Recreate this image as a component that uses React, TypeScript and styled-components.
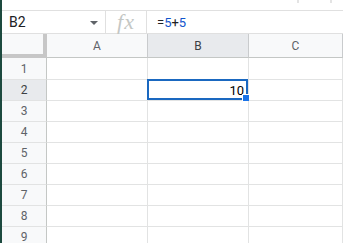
import styled, { createGlobalStyle } from 'styled-components'

const GlobalStyle = createGlobalStyle`
  html, body {
    margin: 0;
    padding: 0;
    background: #ffffff;
    overflow: hidden;
  }
  * {
    box-sizing: border-box;
  }
`

const Page = styled.div`
  display: flex;
  width: 343px;
  height: 243px;
  overflow: hidden;
  font-family: Roboto, 'Liberation Sans', Arial, sans-serif;
`

const EdgeStrip = styled.div`
  width: 2px;
  flex-shrink: 0;
  background: #1d4a3f;
`

const Main = styled.div`
  flex: 1;
  display: flex;
  flex-direction: column;
  min-width: 0;
  & > * {
    flex-shrink: 0;
  }
`

const TopStrip = styled.div`
  height: 11px;
  border-bottom: 1px solid #e0e0e0;
  display: flex;
  justify-content: flex-end;
  align-items: flex-start;
  gap: 31px;
  padding-right: 11px;
`

const ToolbarTick = styled.span`
  width: 2px;
  height: 3px;
  background: #e4e4e4;
`

const FormulaBar = styled.div`
  height: 23px;
  display: flex;
  align-items: center;
  border-bottom: 1px solid #e0e0e0;
`

const NameBox = styled.div`
  width: 104px;
  height: 100%;
  display: flex;
  align-items: center;
  justify-content: space-between;
  padding-left: 7px;
  padding-right: 7px;
  border-right: 1px solid #e0e0e0;
  font-size: 14px;
  color: #202124;
`

const Caret = styled.span`
  width: 0;
  height: 0;
  border-left: 4px solid transparent;
  border-right: 4px solid transparent;
  border-top: 4px solid #5f6368;
  margin-top: 1px;
`

const FxBox = styled.div`
  width: 41px;
  height: 100%;
  display: flex;
  align-items: center;
  justify-content: center;
  border-right: 1px solid #e0e0e0;
  font-family: 'Liberation Serif', 'DejaVu Serif', serif;
  font-style: italic;
  font-size: 22px;
  color: #c4c7c5;
  letter-spacing: 1px;
`

const FormulaText = styled.div`
  padding-left: 10px;
  font-size: 13px;
  color: #202124;
`

const Num = styled.span`
  color: #1155cc;
`

const Grid = styled.div`
  display: grid;
  grid-template-columns: 45px 101px 101px 1fr;
  grid-template-rows: 24px 22px repeat(8, 21px);
`

const Corner = styled.div`
  background: #f8f9fa;
  border-right: 4px solid #c7c7c7;
  border-bottom: 4px solid #c7c7c7;
`

const ColHeader = styled.div<{ $active?: boolean }>`
  background: ${(p) => (p.$active ? '#e8eaed' : '#f8f9fa')};
  border-right: 1px solid #c9cbcd;
  border-bottom: 1px solid #c4c7c5;
  display: flex;
  align-items: center;
  justify-content: center;
  font-size: 12px;
  color: ${(p) => (p.$active ? '#3c4043' : '#5f6368')};
`

const RowHeader = styled.div<{ $active?: boolean }>`
  background: ${(p) => (p.$active ? '#e8eaed' : '#f8f9fa')};
  border-right: 1px solid #c4c7c5;
  border-bottom: 1px solid #e2e3e3;
  display: flex;
  align-items: center;
  justify-content: center;
  font-size: 12px;
  color: ${(p) => (p.$active ? '#3c4043' : '#5f6368')};
`

const Cell = styled.div`
  position: relative;
  border-right: 1px solid #e2e3e3;
  border-bottom: 1px solid #e2e3e3;
  display: flex;
  align-items: center;
  justify-content: flex-end;
  padding-right: 4px;
  font-size: 13px;
  color: #000000;
`

const Selection = styled.div`
  position: absolute;
  left: -1px;
  top: -1px;
  right: 0;
  bottom: 0;
  border: 2px solid #1a68c0;
  pointer-events: none;
`

const FillHandle = styled.div`
  position: absolute;
  right: -2px;
  bottom: -2px;
  width: 8px;
  height: 8px;
  background: #1a73e8;
  border: 1px solid #ffffff;
`

const columns = ['A', 'B', 'C']
const rows = [1, 2, 3, 4, 5, 6, 7, 8, 9]

export default function App() {
  return (
    <>
      <GlobalStyle />
      <Page>
        <EdgeStrip />
        <Main>
          <TopStrip>
            <ToolbarTick />
            <ToolbarTick />
          </TopStrip>
          <FormulaBar>
            <NameBox>
              B2
              <Caret />
            </NameBox>
            <FxBox>fx</FxBox>
            <FormulaText>
              =<Num>5</Num>+<Num>5</Num>
            </FormulaText>
          </FormulaBar>
          <Grid>
            <Corner />
            {columns.map((c) => (
              <ColHeader key={c} $active={c === 'B'}>
                {c}
              </ColHeader>
            ))}
            {rows.map((r) => [
              <RowHeader key={`h${r}`} $active={r === 2}>
                {r}
              </RowHeader>,
              ...columns.map((c) =>
                r === 2 && c === 'B' ? (
                  <Cell key={`${c}${r}`}>
                    10
                    <Selection />
                    <FillHandle />
                  </Cell>
                ) : (
                  <Cell key={`${c}${r}`} />
                )
              ),
            ])}
          </Grid>
        </Main>
      </Page>
    </>
  )
}
